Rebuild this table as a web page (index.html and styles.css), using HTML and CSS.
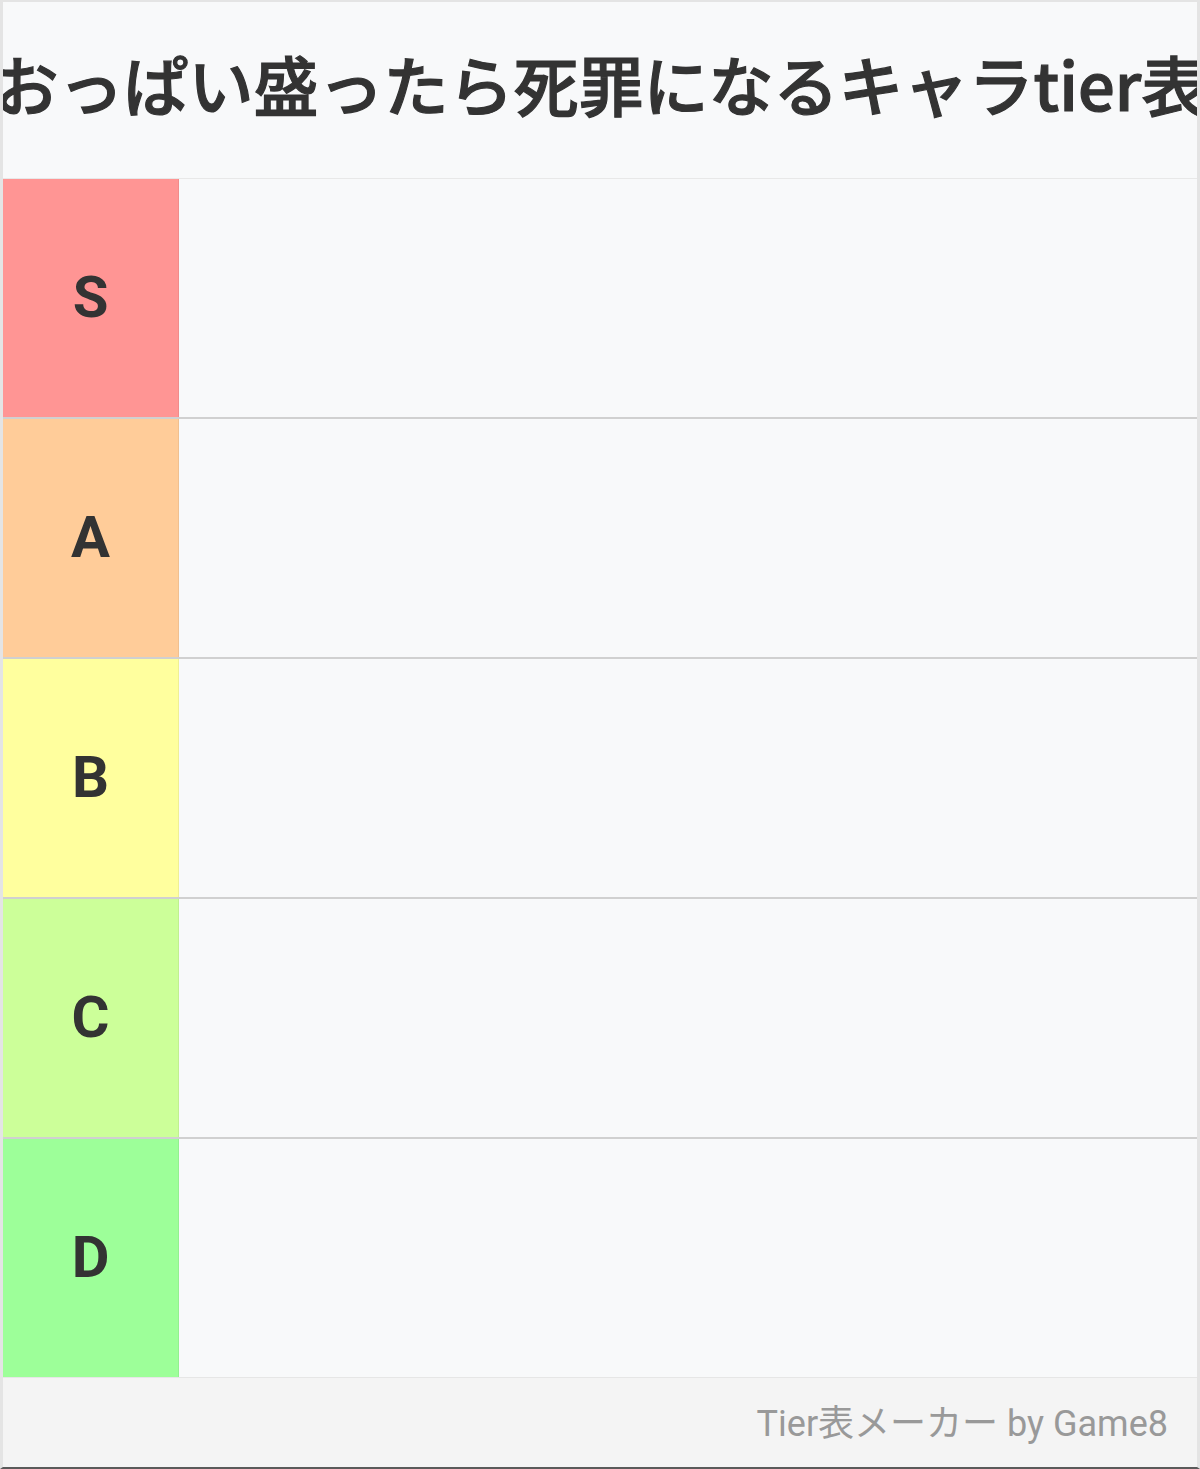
FILE: index.html
```html
<!DOCTYPE html>
<html lang="ja">
<head>
<meta charset="utf-8">
<title>Tier表</title>
<link rel="stylesheet" href="styles.css">
</head>
<body>
<div class="board">
  <div class="title"><h1>おっぱい盛ったら死罪になるキャラtier表</h1></div>
  <div class="tiers">
    <div class="row"><div class="label tier-s">S</div><div class="items"></div></div>
    <div class="row"><div class="label tier-a">A</div><div class="items"></div></div>
    <div class="row"><div class="label tier-b">B</div><div class="items"></div></div>
    <div class="row"><div class="label tier-c">C</div><div class="items"></div></div>
    <div class="row last"><div class="label tier-d">D</div><div class="items"></div></div>
  </div>
  <div class="footer">Tier表メーカー by Game8</div>
</div>
</body>
</html>
```
FILE: styles.css
```css
html, body {
  margin: 0;
  padding: 0;
  background: #f8f9fa;
}
.board {
  box-sizing: border-box;
  width: 1200px;
  height: 1469px;
  border-left: 3px solid #e4e4e4;
  border-right: 3px solid #e4e4e4;
  border-top: 2px solid #e4e4e4;
  border-bottom: 2px solid #5a5a5a;
  display: flex;
  flex-direction: column;
  background: #f8f9fa;
}
.title {
  height: 176px;
  border-bottom: 1px solid #e8e8e8;
  display: flex;
  align-items: center;
  justify-content: center;
  overflow: hidden;
  background: #f8f9fa;
}
.title h1 {
  margin: 0;
  flex: none;
  white-space: nowrap;
  font-family: "Noto Sans CJK JP", "Noto Sans", sans-serif;
  font-weight: 500;
  font-size: 65px;
  color: #333333;
  -webkit-text-stroke: 1.2px #333333;
  line-height: 1;
  padding-bottom: 14px;
}
.tiers {
  display: flex;
  flex-direction: column;
}
.row {
  height: 238px;
  display: flex;
  border-bottom: 2px solid #d0d0d0;
}
.row.last {
  border-bottom: 1px solid #e6e6e6;
}
.label {
  width: 176px;
  border-right: 1px solid rgba(0,0,0,0.06);
  display: flex;
  align-items: center;
  justify-content: center;
  font-family: Roboto, "Liberation Sans", sans-serif;
  font-weight: 700;
  font-size: 58px;
  color: #333333;
  padding-bottom: 3px;
  box-sizing: border-box;
}
.items {
  flex: 1;
  background: #f8f9fa;
}
.tier-s { background: #ff9594; }
.tier-a { background: #ffcc99; }
.tier-b { background: #ffff9e; }
.tier-c { background: #ccff99; }
.tier-d { background: #9dff99; }
.footer {
  flex: 1;
  background: #f4f4f4;
  display: flex;
  align-items: center;
  justify-content: flex-end;
  padding-right: 29px;
  padding-bottom: 6px;
  font-family: Roboto, "Noto Sans CJK JP", sans-serif;
  font-size: 36px;
  color: #999999;
}
```
